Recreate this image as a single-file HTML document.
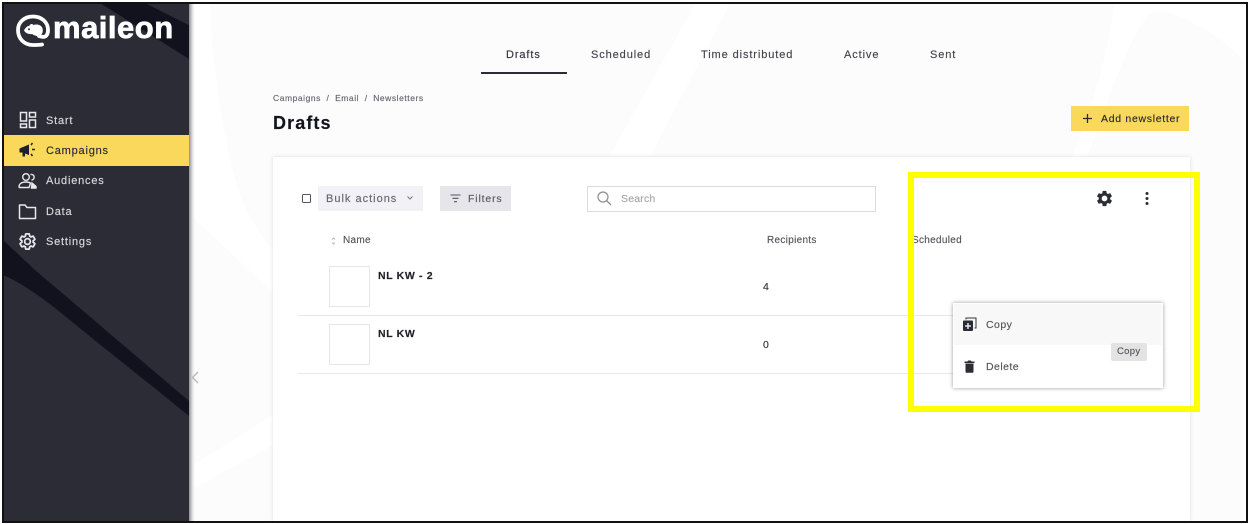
<!DOCTYPE html>
<html lang="en"><head><meta charset="utf-8"><title>Maileon Drafts</title>
<style>
html,body{margin:0;padding:0;background:#fff}
#p{position:relative;width:1248px;height:524px;overflow:hidden;background:#fff;font-family:"Liberation Sans",sans-serif}
#p div,#p span.t,#p svg{position:absolute}
.t{white-space:nowrap;line-height:14px;-webkit-text-stroke:.15px currentColor}
.nav{font-size:11px;letter-spacing:.8px;color:#d8d8dc;left:46px}
.tab{font-size:11px;letter-spacing:.9px;color:#44444c;top:48px}
.hd{font-size:10px;letter-spacing:.3px;color:#55555c}
.b{font-weight:bold;color:#1f1f28;font-size:10.5px;letter-spacing:.65px}
</style></head><body><div id="p">
<svg style="left:0;top:0" width="1248" height="524" viewBox="0 0 1248 524">
<rect x="189" y="3" width="1056" height="518" fill="#fcfcfd"/>
<path d="M190 3H210C212 70 225 150 240 195C250 220 262 238 273 250V292L190 215Z" fill="#fff"/>
<path d="M190 467L273 415V445L190 490Z" fill="#fff"/>
<path d="M696 3L730 3L650 157L609 157Z" fill="#fff"/>
<path d="M1114 3C1108 60 1090 110 1072 157H1087C1105 110 1122 55 1143 22C1150 10 1160 9 1175 15C1205 26 1230 45 1245 62V3Z" fill="#fff"/>
<rect x="1243" y="3" width="2" height="518" fill="#fff"/>
<rect x="3" y="3" width="186" height="518" fill="#2c2c37"/>
<path d="M100 3H145L189 25V59Z" fill="#12121f"/>
<path d="M145 3H189V25Z" fill="#2c2c37"/>
<path d="M3 240L35 270L189 401V416C140 376 100 345 60 312C40 296 20 282 3 275Z" fill="#12121f"/>
</svg>
<div style="left:189px;top:3px;width:6px;height:518px;background:linear-gradient(90deg,#8f8f96,#e6e6e8 60%,rgba(255,255,255,0))"></div>
<div style="left:273px;top:157px;width:917px;height:364px;background:#fff;box-shadow:0 0 4px rgba(0,0,0,.12)"></div>

<div style="left:3px;top:135px;width:186px;height:31px;background:#fad85c"></div>

<svg style="left:14px;top:13px" width="40" height="36" viewBox="0 0 40 36">
<path d="M28 31.500C25 32 22 32 19 32C10 32 4 25.500 4 17C4 9 10.500 3.500 19 3.500C27.500 3.500 34 9 34 17C34 21 32.500 24 29 24L25 23" fill="none" stroke="#fff" stroke-width="3.800" stroke-linecap="round"/>
<path d="M10 17.500C11.500 14.500 13.500 13 15.500 12.800C16 10.500 18.500 10.500 19.500 12C23 10.800 27.500 12 28.500 15.500C29.500 19 28 22 25 23C22 23.500 20 22 18 21C14.500 21.500 11.500 20 10 17.500Z" fill="#fff"/>
<circle cx="15" cy="16.200" r="1" fill="#2c2c37"/>
</svg>
<span class="t" style="left:53px;top:11px;font-size:31px;line-height:34px;font-weight:bold;color:#fff;letter-spacing:.5px;-webkit-text-stroke:.7px #fff">maileon</span>

<svg style="left:19px;top:111px" width="18" height="18" viewBox="0 0 18 18" fill="none" stroke="#e8e8ec" stroke-width="1.500"><rect x="1.500" y="1.500" width="6" height="8.500"/><rect x="10.500" y="1.500" width="6" height="4.500"/><rect x="1.500" y="13" width="6" height="3.500"/><rect x="10.500" y="9" width="6" height="7.500"/></svg>
<span class="t nav" style="top:114px">Start</span>
<svg style="left:19px;top:142px" width="18" height="16" viewBox="0 0 18 16"><path d="M0.500 6.500L10 2.500V13L6 11.500V14.500H3.500V10.500H0.500Z" fill="#1f1f28"/><path d="M12 3L13.500 1M13 7.500H16M12 12L13.500 14" stroke="#1f1f28" stroke-width="1.500" fill="none"/></svg>
<span class="t nav" style="top:144px;color:#2a2a33">Campaigns</span>
<svg style="left:18px;top:172px" width="20" height="18" viewBox="0 0 20 18" fill="none" stroke="#e8e8ec" stroke-width="1.400"><circle cx="8" cy="5" r="3.300"/><path d="M1 15C1 11.500 4 10 8 10C10 10 11.500 10.400 12.500 11.200L11 15.500H1.500Z"/><path d="M12.500 2.500C15 2 16.500 3.500 16 6C15.600 7.500 14.500 8 13.500 8" /><path d="M14 11L18 14.500V16H13.500Z" fill="#e8e8ec"/></svg>
<span class="t nav" style="top:174px">Audiences</span>
<svg style="left:18px;top:203px" width="19" height="17" viewBox="0 0 19 17" fill="none" stroke="#e8e8ec" stroke-width="1.500"><path d="M1.500 15.500V2H7L9 4.500H17.500V15.500Z" stroke-linejoin="round"/></svg>
<span class="t nav" style="top:205px">Data</span>
<svg style="left:18px;top:232px" width="19" height="19" viewBox="0 0 24 24"><path d="M19.140 12.940c.04-.3.06-.61.06-.94 0-.32-.02-.64-.07-.94l2.030-1.580c.18-.14.23-.41.12-.61l-1.920-3.320c-.12-.22-.37-.29-.59-.22l-2.390.96c-.5-.38-1.030-.7-1.620-.94l-.36-2.540c-.04-.24-.24-.41-.48-.41h-3.840c-.24 0-.43.17-.47.41l-.36 2.540c-.59.24-1.130.57-1.620.94l-2.390-.96c-.22-.08-.47 0-.59.22L2.740 8.870c-.12.21-.08.47.12.61l2.030 1.580c-.05.3-.09.63-.09.94s.02.64.07.94l-2.030 1.580c-.18.14-.23.41-.12.61l1.920 3.320c.12.22.37.29.59.22l2.390-.96c.5.38 1.030.7 1.620.94l.36 2.540c.05.24.24.41.48.41h3.840c.24 0 .44-.17.47-.41l.36-2.540c.59-.24 1.130-.56 1.620-.94l2.390.96c.22.08.47 0 .59-.22l1.920-3.320c.12-.22.07-.47-.12-.61l-2.010-1.580zM12 15.600c-1.980 0-3.600-1.620-3.600-3.600s1.620-3.600 3.600-3.600 3.600 1.620 3.600 3.600-1.620 3.600-3.600 3.600z" fill="none" stroke="#e8e8ec" stroke-width="2.200"/></svg>
<span class="t nav" style="top:235px">Settings</span>

<svg style="left:190px;top:371px" width="10" height="13" viewBox="0 0 10 13"><path d="M8 1L2.500 6.500L8 12" fill="none" stroke="#b5b5ba" stroke-width="1.300"/></svg>

<span class="t tab" style="left:506px;color:#33333b">Drafts</span>
<span class="t tab" style="left:591px">Scheduled</span>
<span class="t tab" style="left:701px">Time distributed</span>
<span class="t tab" style="left:844px">Active</span>
<span class="t tab" style="left:930px">Sent</span>
<div style="left:481px;top:72px;width:86px;height:2px;background:#2c2c37"></div>

<span class="t" style="left:273px;top:91px;font-size:8.500px;letter-spacing:.55px;color:#66666d;word-spacing:2.700px">Campaigns / Email / Newsletters</span>
<span class="t" style="left:273px;top:112px;font-size:18px;line-height:22px;font-weight:bold;letter-spacing:1.100px;color:#14141e">Drafts</span>

<div style="left:1071px;top:106px;width:118px;height:25px;background:#fad85c"></div>
<svg style="left:1082px;top:113px" width="11" height="11" viewBox="0 0 11 11"><path d="M5.500 1V10M1 5.500H10" stroke="#2a2a33" stroke-width="1.300"/></svg>
<span class="t" style="left:1101px;top:112px;font-size:10.500px;letter-spacing:.7px;color:#2a2a33">Add newsletter</span>

<div style="left:302px;top:194px;width:7px;height:7px;border:1.300px solid #55555c;border-radius:1.500px"></div>
<div style="left:318px;top:186px;width:105px;height:25px;background:#f2f2f6"></div>
<span class="t" style="left:326px;top:192px;font-size:11px;letter-spacing:1px;color:#66666e">Bulk actions</span>
<svg style="left:406px;top:195px" width="8" height="6" viewBox="0 0 8 6"><path d="M1.500 1.500L4 4L6.500 1.500" fill="none" stroke="#77777e" stroke-width="1"/></svg>
<div style="left:440px;top:186px;width:71px;height:25px;background:#e5e5ea"></div>
<svg style="left:450px;top:194px" width="11" height="9" viewBox="0 0 11 9"><path d="M0.500 1H10.500M2.500 4.300H8.500M4 7.700H7" stroke="#55555c" stroke-width="1.100" fill="none"/></svg>
<span class="t" style="left:468px;top:192px;font-size:10.500px;letter-spacing:.85px;color:#5a5a62">Filters</span>

<div style="left:587px;top:186px;width:287px;height:24px;border:1px solid #dcdcdf;background:#fff"></div>
<svg style="left:596px;top:190px" width="17" height="17" viewBox="0 0 17 17"><circle cx="7" cy="7" r="5" fill="none" stroke="#8c8c92" stroke-width="1.200"/><path d="M10.800 10.800L15 15" stroke="#8c8c92" stroke-width="1.300"/></svg>
<span class="t" style="left:621px;top:192px;font-size:10.500px;letter-spacing:.2px;color:#a5a5aa">Search</span>

<svg style="left:1095px;top:189px" width="19" height="19" viewBox="0 0 24 24"><path d="M19.140 12.940c.04-.3.06-.61.06-.94 0-.32-.02-.64-.07-.94l2.030-1.580c.18-.14.23-.41.12-.61l-1.920-3.320c-.12-.22-.37-.29-.59-.22l-2.390.96c-.5-.38-1.030-.7-1.620-.94l-.36-2.540c-.04-.24-.24-.41-.48-.41h-3.840c-.24 0-.43.17-.47.41l-.36 2.540c-.59.24-1.130.57-1.620.94l-2.390-.96c-.22-.08-.47 0-.59.22L2.740 8.870c-.12.21-.08.47.12.61l2.030 1.580c-.05.3-.09.63-.09.94s.02.64.07.94l-2.030 1.580c-.18.14-.23.41-.12.61l1.920 3.320c.12.22.37.29.59.22l2.390-.96c.5.38 1.030.7 1.620.94l.36 2.540c.05.24.24.41.48.41h3.840c.24 0 .44-.17.47-.41l.36-2.540c.59-.24 1.130-.56 1.620-.94l2.390.96c.22.08.47 0 .59-.22l1.920-3.320c.12-.22.07-.47-.12-.61l-2.010-1.580zM12 15.600c-1.980 0-3.600-1.620-3.600-3.600s1.620-3.600 3.600-3.600 3.600 1.620 3.600 3.600-1.620 3.600-3.600 3.600z" fill="#2c2c34"/></svg>
<svg style="left:1144px;top:191px" width="6" height="15" viewBox="0 0 6 15" fill="#2c2c34"><circle cx="3" cy="2.500" r="1.500"/><circle cx="3" cy="7.500" r="1.500"/><circle cx="3" cy="12.500" r="1.500"/></svg>

<svg style="left:331px;top:237px" width="5" height="8" viewBox="0 0 5 8"><path d="M1 2.500L2.500 1L4 2.500M1 5.500L2.500 7L4 5.500" fill="none" stroke="#a8a8ac" stroke-width=".8"/></svg>
<span class="t hd" style="left:343px;top:234px">Name</span>
<span class="t hd" style="left:767px;top:234px">Recipients</span>
<span class="t hd" style="left:912px;top:234px">Scheduled</span>

<div style="left:329px;top:266px;width:39px;height:39px;border:1px solid #e6e6e8"></div>
<span class="t b" style="left:378px;top:269px">NL KW - 2</span>
<span class="t" style="left:763px;top:280px;font-size:10.500px;color:#33333b">4</span>
<div style="left:298px;top:315px;width:655px;height:1px;background:#e8e8ea"></div>
<div style="left:329px;top:324px;width:39px;height:39px;border:1px solid #e6e6e8"></div>
<span class="t b" style="left:378px;top:327px">NL KW</span>
<span class="t" style="left:763px;top:338px;font-size:10.500px;color:#33333b">0</span>
<div style="left:298px;top:373px;width:655px;height:1px;background:#e8e8ea"></div>

<div style="left:953px;top:303px;width:210px;height:85px;background:#fff;box-shadow:0 0 4px rgba(30,30,40,.45)"></div>
<div style="left:954px;top:304px;width:208px;height:41px;background:#f8f8f8"></div>
<svg style="left:962px;top:317px" width="15" height="15" viewBox="0 0 15 15"><path d="M4 2.500V1H14V11H12.500" fill="none" stroke="#33333b" stroke-width="1"/><rect x="1" y="3.500" width="10" height="10.500" rx="1" fill="#2c2c34"/><path d="M6 6V12M3 9H9" stroke="#fff" stroke-width="1.300"/></svg>
<span class="t" style="left:986px;top:318px;font-size:10.500px;letter-spacing:.45px;color:#55555c">Copy</span>
<svg style="left:964px;top:360px" width="11" height="13" viewBox="0 0 11 13"><path d="M0.500 1.500H3.500L4 .5H7L7.500 1.500H10.500V3H0.500ZM1.500 3.500H9.500V11.500C9.500 12.300 9 12.800 8.300 12.800H2.700C2 12.800 1.500 12.300 1.500 11.500Z" fill="#2c2c34"/></svg>
<span class="t" style="left:986px;top:360px;font-size:10.500px;letter-spacing:.45px;color:#55555c">Delete</span>
<div style="left:1111px;top:343px;width:36px;height:18px;background:#e3e3e3;border-radius:2px"></div>
<span class="t" style="left:1117px;top:345px;font-size:9.500px;letter-spacing:.3px;color:#55555c">Copy</span>

<div style="left:908px;top:172px;width:280px;height:228px;border:6px solid #ffff00"></div>
<div style="left:2px;top:2px;width:1242px;height:517px;border:2px solid #111;"></div>
</div></body></html>
